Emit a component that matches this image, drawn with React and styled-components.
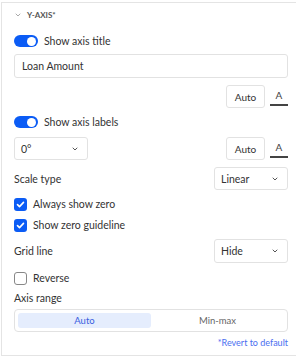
import React from 'react';
import styled, { createGlobalStyle } from 'styled-components';

const GlobalStyle = createGlobalStyle`
  body {
    margin: 0;
    background: #fff;
    font-family: Lato, 'Liberation Sans', sans-serif;
    color: #333;
  }
`;

const Panel = styled.div`
  margin: 2px 0 0 1px;
  width: 287px;
  height: 352px;
  border: 1px solid #e4e4e4;
  border-right: none;
  padding: 0 0 0 12px;
  display: flex;
  flex-direction: column;
`;

const Inner = styled.div`
  width: 274px;
  display: flex;
  flex-direction: column;
`;

const Header = styled.div`
  height: 24px;
  display: flex;
  align-items: center;
  gap: 5px;
  font-size: 8px;
  font-weight: 700;
  color: #555;
`;

const Row = styled.div`
  display: flex;
  align-items: center;
  margin-top: ${(p) => p.$mt || 0}px;
  height: ${(p) => p.$h || 14}px;
  justify-content: ${(p) => p.$justify || 'flex-start'};
`;

const Label = styled.span`
  font-size: 10.5px;
  color: #333;
  line-height: 14px;
`;

const Toggle = styled.div`
  width: 24px;
  height: 12px;
  border-radius: 6px;
  background: #0b5cf5;
  position: relative;
  margin-right: 6px;
  flex-shrink: 0;
  &::after {
    content: '';
    position: absolute;
    right: 2px;
    top: 1.5px;
    width: 9px;
    height: 9px;
    border-radius: 50%;
    background: #fff;
  }
`;

const TextInput = styled.div`
  box-sizing: border-box;
  width: 100%;
  height: 24px;
  border: 1px solid #e2e2e2;
  border-radius: 3px;
  display: flex;
  align-items: center;
  padding-left: 7px;
  font-size: 10.5px;
  color: #333;
`;

const Button = styled.div`
  box-sizing: border-box;
  width: 39px;
  height: 23px;
  border: 1px solid #e2e2e2;
  border-radius: 3px;
  display: flex;
  align-items: center;
  justify-content: center;
  font-size: 10px;
  color: #333;
`;

const ColorA = styled.div`
  width: 18px;
  height: 23px;
  margin-left: 5px;
  display: flex;
  flex-direction: column;
  align-items: center;
  justify-content: flex-end;
  font-size: 10px;
  color: #444;
  line-height: 11px;
  &::after {
    content: '';
    display: block;
    width: 18px;
    height: 2px;
    background: #444;
    margin-top: 3px;
    margin-bottom: 2px;
  }
`;

const Select = styled.div`
  box-sizing: border-box;
  width: ${(p) => p.$w}px;
  height: ${(p) => p.$h || 23}px;
  border: 1px solid #e2e2e2;
  border-radius: 3px;
  display: flex;
  align-items: center;
  justify-content: space-between;
  padding: 0 8px 0 6px;
  font-size: 10.5px;
  color: #333;
`;

const Checkbox = styled.div`
  box-sizing: border-box;
  width: 13px;
  height: 13px;
  border-radius: 3px;
  margin-right: 6px;
  flex-shrink: 0;
  display: flex;
  align-items: center;
  justify-content: center;
  background: ${(p) => (p.$checked ? '#0b5cf5' : '#fff')};
  border: ${(p) => (p.$checked ? 'none' : '1px solid #888')};
`;

const Segmented = styled.div`
  box-sizing: border-box;
  width: 100%;
  height: 23px;
  border: 1px solid #e2e2e2;
  border-radius: 4px;
  padding: 3px;
  display: flex;
`;

const Segment = styled.div`
  flex: 1;
  border-radius: 3px;
  display: flex;
  align-items: center;
  justify-content: center;
  font-size: 9.5px;
  background: ${(p) => (p.$active ? '#e5edfd' : 'transparent')};
  color: ${(p) => (p.$active ? '#3b5ee0' : '#666')};
`;

const Revert = styled.div`
  margin-top: 5px;
  height: 12px;
  text-align: right;
  font-size: 9px;
  line-height: 12px;
  color: #4a6ef0;
`;

const Chevron = ({ color = '#555', size = 8 }) => (
  <svg width={size} height={size} viewBox="0 0 8 8" fill="none">
    <path d="M2 3l2 2 2-2" stroke={color} strokeWidth="1" strokeLinecap="round" strokeLinejoin="round" />
  </svg>
);

const Check = () => (
  <svg width="9" height="9" viewBox="0 0 9 9" fill="none">
    <path d="M1.5 4.6l2 2 4-4.2" stroke="#fff" strokeWidth="1.6" strokeLinecap="round" strokeLinejoin="round" />
  </svg>
);

export default function App() {
  return (
    <>
      <GlobalStyle />
      <Panel>
        <Inner>
          <Header>
            <Chevron color="#aaa" />
            <span>Y-AXIS*</span>
          </Header>
          <Row $mt={7}>
            <Toggle />
            <Label>Show axis title</Label>
          </Row>
          <Row $mt={6} $h={24}>
            <TextInput>Loan Amount</TextInput>
          </Row>
          <Row $mt={7} $h={23} $justify="flex-end">
            <Button>Auto</Button>
            <ColorA>A</ColorA>
          </Row>
          <Row $mt={7}>
            <Toggle />
            <Label>Show axis labels</Label>
          </Row>
          <Row $mt={8} $h={23} $justify="space-between">
            <Select $w={74}>
              <span>0°</span>
              <Chevron />
            </Select>
            <Row $h={23}>
              <Button>Auto</Button>
              <ColorA>A</ColorA>
            </Row>
          </Row>
          <Row $mt={7} $h={23} $justify="space-between">
            <Label>Scale type</Label>
            <Select $w={74}>
              <span>Linear</span>
              <Chevron />
            </Select>
          </Row>
          <Row $mt={7}>
            <Checkbox $checked>
              <Check />
            </Checkbox>
            <Label>Always show zero</Label>
          </Row>
          <Row $mt={7}>
            <Checkbox $checked>
              <Check />
            </Checkbox>
            <Label>Show zero guideline</Label>
          </Row>
          <Row $mt={7} $h={24} $justify="space-between">
            <Label>Grid line</Label>
            <Select $w={74} $h={24}>
              <span>Hide</span>
              <Chevron />
            </Select>
          </Row>
          <Row $mt={8}>
            <Checkbox />
            <Label>Reverse</Label>
          </Row>
          <Row $mt={6}>
            <Label>Axis range</Label>
          </Row>
          <Row $mt={4} $h={23}>
            <Segmented>
              <Segment $active>Auto</Segment>
              <Segment>Min-max</Segment>
            </Segmented>
          </Row>
          <Revert>*Revert to default</Revert>
        </Inner>
      </Panel>
    </>
  );
}
